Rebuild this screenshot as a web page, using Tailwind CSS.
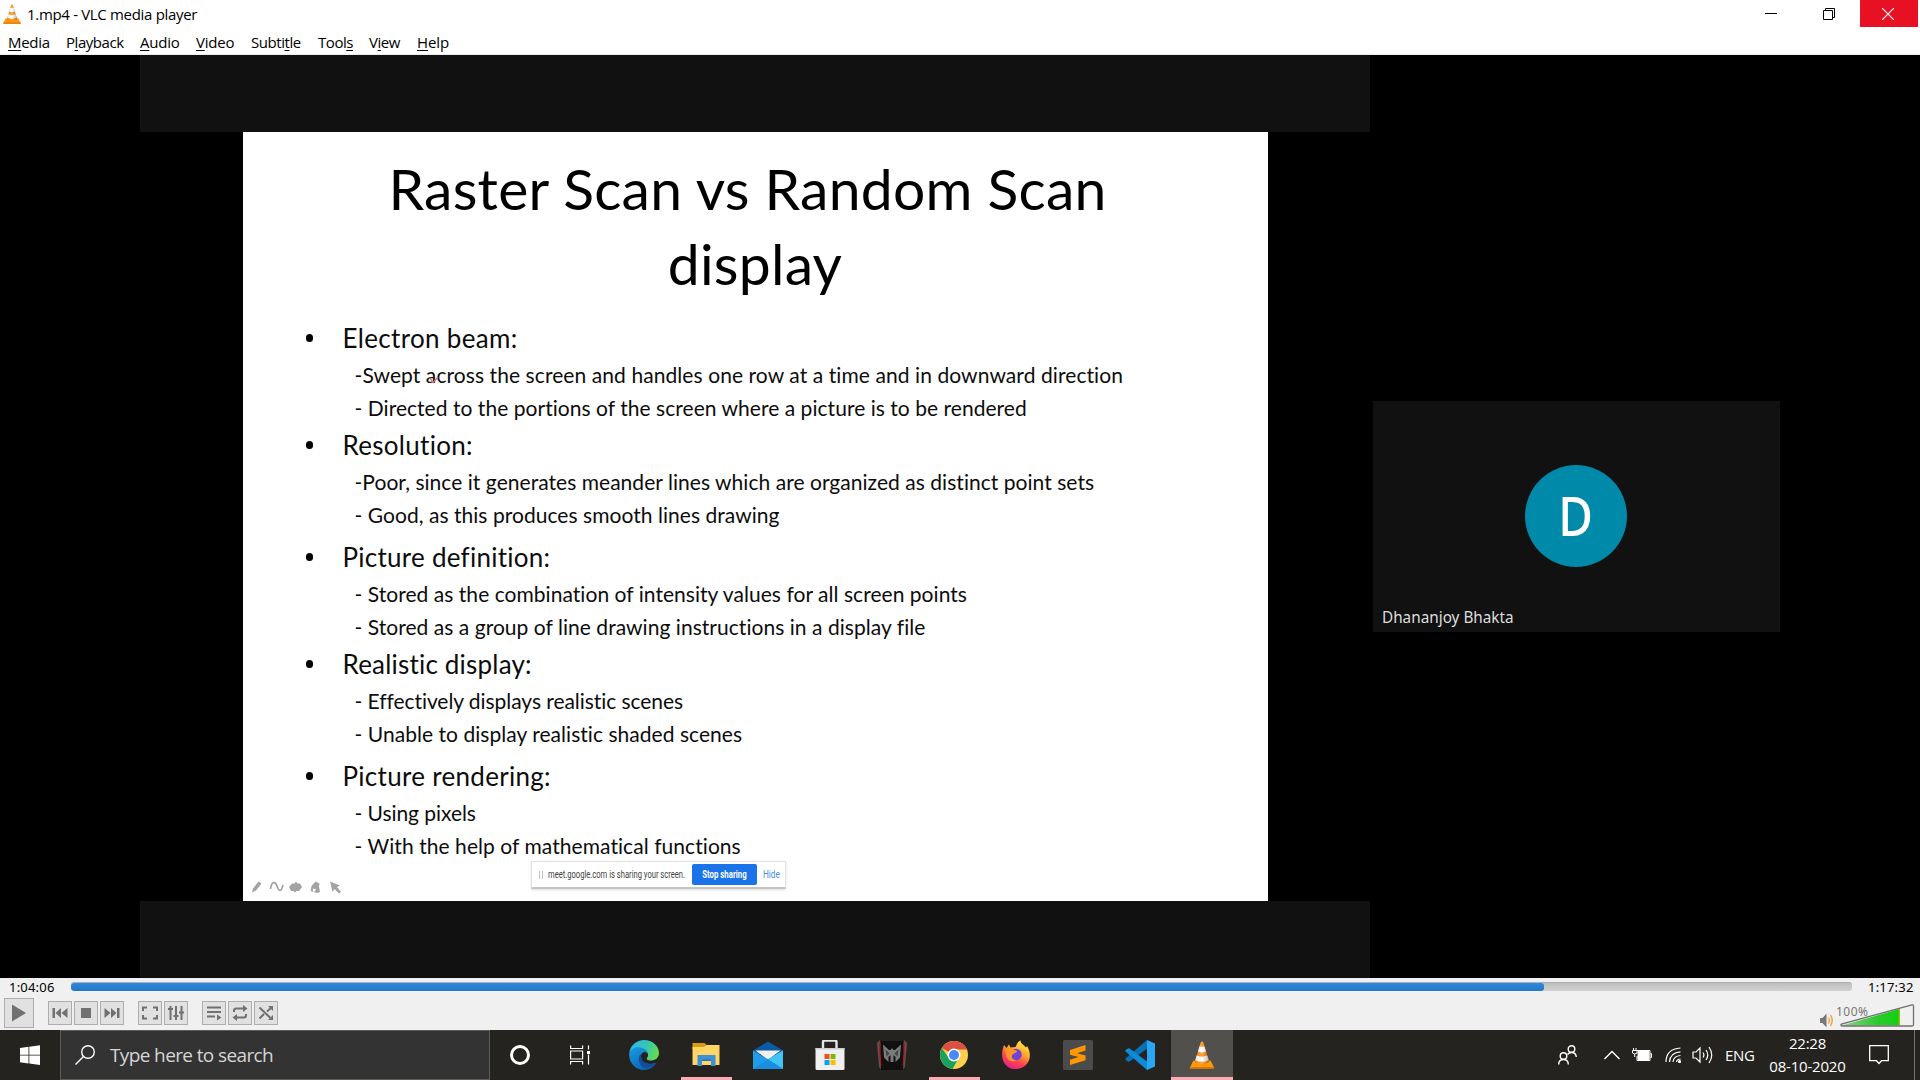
<!DOCTYPE html>
<html lang="en">
<head>
<meta charset="utf-8">
<title>1.mp4 - VLC media player</title>
<script src="https://cdn.jsdelivr.net/npm/@tailwindcss/browser@4"></script>
</head>
<body class="w-[1920px] h-[1080px] overflow-hidden bg-white font-['Open_Sans',sans-serif] flex flex-col">

<!-- Shared cone logo -->
<svg class="absolute w-0 h-0">
  <defs>
    <linearGradient id="cone" x1="0" x2="1" y1="0" y2="0"><stop offset="0" stop-color="#f57c00"/><stop offset=".5" stop-color="#ffa63d"/><stop offset="1" stop-color="#d95f00"/></linearGradient>
    <linearGradient id="coneW" x1="0" x2="1" y1="0" y2="0"><stop offset="0" stop-color="#e8e8e8"/><stop offset=".5" stop-color="#ffffff"/><stop offset="1" stop-color="#b9b9b9"/></linearGradient>
    <symbol id="vlc" viewBox="0 0 26 29">
      <path d="M4 20.500h18l3.500 7a.7.7 0 0 1-.6 1H1.100a.7.7 0 0 1-.6-1z" fill="#ff9a0c"/>
      <path d="M.4 27h25.200v1.500H.6z" fill="#e07600"/>
      <path d="M11.800 1Q13 0 14.200 1L20.500 22q-7.500 4-15 0z" fill="url(#cone)"/>
      <path d="M10.500 5.400q2.500 1.200 5 0l1.700 5.400q-4.200 2-8.400 0zM7.500 15q5.500 2.400 11 0l1.500 5q-7 3.200-14 0z" fill="url(#coneW)"/>
    </symbol>
  </defs>
</svg>

<!-- Title bar -->
<header class="h-7 shrink-0 flex items-start">
  <svg class="w-[18px] h-5 ml-[3px] mt-1"><use href="#vlc"/></svg>
  <div class="ml-[6px] text-[15px] leading-7 tracking-[-0.32px] text-black">1.mp4 - VLC media player</div>
  <div class="ml-auto mr-[2px] flex h-[27px]">
    <div class="w-[58px] pr-1 flex items-center justify-center"><div class="w-3 h-px bg-black"></div></div>
    <div class="w-[58px] pr-1 flex items-center justify-center">
      <svg class="w-3 h-3 mt-[1px]" viewBox="0 0 12 12" fill="none" stroke="#000"><path d="M.5 2.500h9v9h-9zM2.500 2.500v-2h9v9h-2"/></svg>
    </div>
    <div class="w-[58px] pr-[2px] flex items-center justify-center bg-[#e81123]">
      <svg class="w-3 h-3 mt-[1px]" viewBox="0 0 12 12" stroke="#fff" stroke-width="1.100"><path d="M0 0l12 12M12 0L0 12"/></svg>
    </div>
  </div>
</header>

<!-- Menu bar -->
<nav class="h-[27px] shrink-0 flex pl-2 border-b border-[#ececec] text-[15px] leading-[29px] tracking-[-0.45px] text-black [&_u]:underline-offset-2 [&_u]:decoration-1 whitespace-nowrap">
  <div class="w-[58px] tracking-[-0.3px]"><u>M</u>edia</div>
  <div class="w-[74px]">P<u>l</u>ayback</div>
  <div class="w-[56px] tracking-[-0.2px]"><u>A</u>udio</div>
  <div class="w-[55px] tracking-[-0.2px]"><u>V</u>ideo</div>
  <div class="w-[67px]">Subti<u>t</u>le</div>
  <div class="w-[51px]">Tool<u>s</u></div>
  <div class="w-[48px]">V<u>i</u>ew</div>
  <div class="tracking-[-0.1px]"><u>H</u>elp</div>
</nav>

<!-- Video surface -->
<main class="h-[923px] shrink-0 bg-black flex pl-[140px]">
  <div class="w-[1230px] bg-black flex flex-col">
    <div class="h-[77px] bg-[#111111]"></div>
    <section class="relative w-[1025px] h-[769px] ml-[102.500px] bg-white font-['Lato',sans-serif] text-[#0c0c0c] pt-[19px]">
      <h1 class="text-center text-[57px] leading-[75px] tracking-[0.25px] text-black">Raster Scan vs Random Scan&nbsp;<br>display</h1>
      <ul class="mt-[19px] flex flex-col whitespace-nowrap text-[21px] leading-[33px] tracking-[0.04px]">
        <li>
          <div class="h-[36px] mb-[2px] flex items-center pl-[63px]"><span class="w-[7px] h-2 rounded-full bg-black"></span><span class="ml-[30px] text-[26px] leading-[36px] tracking-[0.33px]">Electron beam:</span></div>
          <div class="pl-[112px] tracking-[0.08px]">-Swept across the screen and handles one row at a time and in downward direction</div>
          <div class="pl-[112px]">- Directed to the portions of the screen where a picture is to be rendered</div>
        </li>
        <li class="mt-[3px]">
          <div class="h-[36px] mb-[2px] flex items-center pl-[63px]"><span class="w-[7px] h-2 rounded-full bg-black"></span><span class="ml-[30px] text-[26px] leading-[36px] tracking-[0.3px]">Resolution:</span></div>
          <div class="pl-[112px]">-Poor, since it generates meander lines which are organized as distinct point sets</div>
          <div class="pl-[112px]">- Good, as this produces smooth lines drawing</div>
        </li>
        <li class="mt-[8px]">
          <div class="h-[36px] mb-[2px] flex items-center pl-[63px]"><span class="w-[7px] h-2 rounded-full bg-black"></span><span class="ml-[30px] text-[26px] leading-[36px] tracking-[0.26px]">Picture definition:</span></div>
          <div class="pl-[112px]">- Stored as the combination of intensity values for all screen points</div>
          <div class="pl-[112px]">- Stored as a group of line drawing instructions in a display file</div>
        </li>
        <li class="mt-[3px]">
          <div class="h-[36px] mb-[2px] flex items-center pl-[63px]"><span class="w-[7px] h-2 rounded-full bg-black"></span><span class="ml-[30px] text-[26px] leading-[36px] tracking-[0.2px]">Realistic display:</span></div>
          <div class="pl-[112px] tracking-[-0.06px]">- Effectively displays realistic scenes</div>
          <div class="pl-[112px]">- Unable to display realistic shaded scenes</div>
        </li>
        <li class="mt-[8px]">
          <div class="h-[36px] mb-[2px] flex items-center pl-[63px]"><span class="w-[7px] h-2 rounded-full bg-black"></span><span class="ml-[30px] text-[26px] leading-[36px] tracking-[0.3px]">Picture rendering:</span></div>
          <div class="pl-[112px] tracking-[-0.06px]">- Using pixels</div>
          <div class="pl-[112px] tracking-[0.06px]">- With the help of mathematical functions</div>
        </li>
      </ul>

      <!-- Laser pointer mark -->
      <svg class="absolute left-[186px] top-[243px] w-[10px] h-[10px]" viewBox="0 0 10 10" fill="none" stroke="#e0687c" stroke-width="1.300"><path d="M1 3l3 4.500L9 2"/></svg>

      <!-- Slide show pen tools -->
      <svg class="absolute left-[7px] top-[748px] w-[94px] h-[14px]" viewBox="0 0 94 14" fill="#a3a3a3">
        <path d="M2 12.500l1-4 5.500-7 3 2-5.500 7z"/>
        <path d="M20.500 9c1-8 5-8 6.500-3s4 7 6-1" fill="none" stroke="#a3a3a3" stroke-width="1.700"/>
        <path d="M39 7l3-3.500h2.500L46 1.500l1.500 2H50L52 7l-3 4h-2.500L45 12.500 43.500 11H41z"/>
        <path d="M60.500 11l1-5 4-4.500 4 2-.5 3 1 5.500-3 1z"/><path d="M63 8.500l3 1-1 2h-2z" fill="#fff"/>
        <path d="M80 1.500l10 4-3 1.500 4 5-2 1.500-4.500-4.500-2 3z"/>
      </svg>

      <!-- Screen sharing notice -->
      <div class="absolute left-[288px] top-[729px] w-[255px] h-[28px] bg-white border border-[#e2e2e2] border-b-2 border-b-[#c4c4c4] shadow-sm flex items-center font-['Roboto',sans-serif] whitespace-nowrap">
        <div class="ml-[7px] w-[4px] h-2 border-x border-[#c2c2c2]"></div>
        <div class="ml-[5px] w-[144px] text-[10px] leading-3 text-[#444] origin-left scale-x-[0.76]">meet.google.com is sharing your screen.</div>
        <div class="w-[65px] h-[21px] rounded-[2px] bg-[#1a73e8] flex items-center justify-center text-white font-bold text-[10px]"><span class="scale-x-[0.78]">Stop sharing</span></div>
        <div class="ml-[6px] text-[10px] text-[#4b8ee8] origin-left scale-x-[0.82]">Hide</div>
      </div>
    </section>
    <div class="h-[77px] bg-[#111111]"></div>
  </div>

  <!-- Participant tile -->
  <div class="ml-[3px] mt-[346px] w-[407px] h-[231px] bg-[#111111] relative flex items-center justify-center">
    <div class="w-[102px] h-[102px] -mt-px mr-px rounded-full bg-[#0089a9] flex items-center justify-center text-white text-[54px] leading-none font-medium font-['Noto_Sans',sans-serif]"><span class="scale-x-[0.88] mb-[3px] mr-px">D</span></div>
    <div class="absolute left-[9px] bottom-[4px] font-['Noto_Sans',sans-serif] text-[17px] leading-[22px] text-[#dedede] origin-left scale-x-[0.9] whitespace-nowrap">Dhananjoy Bhakta</div>
  </div>
</main>

<!-- Player controls -->
<div class="h-[52px] shrink-0 bg-[#f0f0f0] flex flex-col">
  <div class="h-[18px] flex items-center font-['Noto_Sans',sans-serif] text-[13px] leading-[18px] text-black">
    <div class="w-[71px] pl-[9px] tracking-[0.2px]">1:04:06</div>
    <div class="w-[1781px] h-[9px] rounded-[3px] border-t border-[#b0b0b0] bg-linear-to-b from-[#bdbdbd] to-[#d2d2d2] mt-[-1px] overflow-hidden">
      <div class="w-[1473px] h-full rounded-[3px] bg-linear-to-b from-[#2b8ae0] to-[#2678c4]"></div>
    </div>
    <div class="pl-[16px] tracking-[0.2px]">1:17:32</div>
  </div>
  <div class="flex-1 flex items-start pl-1 pt-[2px]">
    <div class="w-[30px] h-[30px] border border-[#adadad] bg-[#e1e1e1] flex items-center justify-center">
      <svg class="w-[14px] h-[18px]" viewBox="0 0 14 18" fill="#707070"><path d="M0 0.500l14 8.500L0 17.500z"/></svg>
    </div>
    <div class="ml-[14px] mt-[3px] flex gap-[2px] [&>div]:w-6 [&>div]:h-6 [&>div]:border [&>div]:border-[#adadad] [&>div]:bg-[#e1e1e1] [&>div]:flex [&>div]:items-center [&>div]:justify-center [&_svg]:w-4 [&_svg]:h-4">
      <div><svg viewBox="0 0 16 16" fill="#707070"><path d="M.5 3H3v10H.5zM9 3v10L3.500 8zM15.500 3v10L9.500 8z"/></svg></div>
      <div><svg viewBox="0 0 16 16" fill="#707070"><path d="M3 3h10v10H3z"/></svg></div>
      <div><svg viewBox="0 0 16 16" fill="#707070"><path d="M15.500 3H13v10h2.500zM7 3v10l5.500-5zM.5 3v10l6-5z"/></svg></div>
      <div class="ml-3"><svg viewBox="0 0 16 16" fill="none" stroke="#707070" stroke-width="2"><path d="M1 6V2.500h4M11 2.500h4V6M1 10v3.500h4M11 13.500h4V10"/></svg></div>
      <div><svg viewBox="0 0 16 16" fill="none" stroke="#707070" stroke-width="2"><path d="M2.500 1v14M8 1v14M13.500 1v14M0 4h5M5.500 11h5M11 7.500h5"/></svg></div>
      <div class="ml-3"><svg viewBox="0 0 16 16" fill="none" stroke="#707070" stroke-width="2"><path d="M1 2.500h14M1 7h14M1 11.500h8"/><path d="M11 9.500v6l4.500-3z" fill="#707070" stroke="none"/></svg></div>
      <div><svg viewBox="0 0 16 16" fill="none" stroke="#707070" stroke-width="2"><path d="M2 7V5.500Q2 3.500 4 3.500h8M14 9v1.500q0 2-2 2H4"/><path d="M11 0l4.500 3.500L11 7zM5 9L.5 12.500 5 16z" fill="#707070" stroke="none"/></svg></div>
      <div><svg viewBox="0 0 16 16" fill="none" stroke="#707070" stroke-width="2"><path d="M1.500 2.500L12.500 13M1.500 13.500L6 9M9 6.500L13 3"/><path d="M10 1h5v5zM10 15h5v-5z" fill="#707070" stroke="none"/></svg></div>
    </div>
    <div class="ml-auto mr-[5px] mt-[6px] relative w-[96px] h-[26px]">
      <svg class="w-[96px] h-[26px]" viewBox="0 0 96 26">
        <defs><linearGradient id="vol" x1="0" x2="1"><stop offset="0" stop-color="#8ccf8c"/><stop offset=".6" stop-color="#2ecb2e"/><stop offset=".96" stop-color="#12cf12"/><stop offset="1" stop-color="#b5b51a"/></linearGradient></defs>
        <path d="M1 14h2.500l4-4.500v14l-4-4.500H1z" fill="#777"/>
        <path d="M9.500 13.500q1.500 3 0 6M11.500 11q3.500 5.500 0 11" fill="none" stroke="#ff9a1f" stroke-width="1.300"/>
        <path d="M23 21.500L81 4.800V21.500z" fill="url(#vol)"/>
        <path d="M22.500 20Q21 22 23.500 22H93q1.500 0 1.500-1.500V2Q94.500.5 93 .9z" fill="none" stroke="#6f6f6f" stroke-width="1.300"/>
      </svg>
      <div class="absolute left-[17px] top-0 font-['Noto_Sans',sans-serif] text-[12px] leading-4 tracking-[0.500px] text-[#777]">100%</div>
    </div>
  </div>
</div>

<!-- Taskbar -->
<footer class="h-[50px] shrink-0 bg-[#24231f] flex text-white">
  <div class="w-[60px] flex items-center justify-center">
    <svg class="w-5 h-5" viewBox="0 0 20 20" fill="#fff"><path d="M0 3l8.500-1.200v7.900H0zM9.300 1.700L20 .2v9.500H9.300zM0 10.500h8.500v7.900L0 17.200zM9.300 10.500H20V20L9.300 18.500z"/></svg>
  </div>
  <div class="w-[430px] bg-[#333333] border border-[#5c5b58] flex items-center">
    <svg class="w-5 h-5 ml-[14px]" viewBox="0 0 20 20" fill="none" stroke="#fff" stroke-width="1.400"><circle cx="13" cy="7" r="6.300"/><path d="M8.500 11.500L.5 19.500"/></svg>
    <div class="ml-[15px] text-[19px] tracking-[-0.62px] text-[#d6d6d6]">Type here to search</div>
  </div>
  <div class="w-[60px] flex items-center justify-center"><div class="w-5 h-5 rounded-full border-[3px] border-white"></div></div>
  <div class="w-[63px] flex items-center justify-center pr-2">
    <svg class="w-5 h-5 ml-1" viewBox="0 0 20 20" fill="none" stroke="#fff" stroke-width="1.200"><path d="M.6.5v3h12V.5M.6 19.500v-3h12v3M.6 6h12v8H.6zM18.500.5v4M18.500 9.500v10"/><path d="M17 6h3v3h-3z" fill="#fff" stroke="none"/></svg>
  </div>
  <div class="flex [&>div]:w-[62px] [&>div]:h-[50px] [&>div]:flex [&>div]:items-center [&>div]:justify-center [&>div]:relative [&_svg]:w-[30px] [&_svg]:h-[30px]">
    <!-- Edge -->
    <div><svg viewBox="0 0 30 30">
      <defs><linearGradient id="e1" x1="0" x2="1" y1=".3" y2=".6"><stop offset="0" stop-color="#2fb5ee"/><stop offset=".5" stop-color="#35c5b8"/><stop offset="1" stop-color="#66dd48"/></linearGradient><linearGradient id="e2" x1="0" x2=".6" y1="0" y2="1"><stop offset="0" stop-color="#1b9de2"/><stop offset="1" stop-color="#0c63b5"/></linearGradient></defs>
      <path d="M.4 12C1.500 5 8 0 15 0c8.500 0 15 6 15 13 0 5-4 7.500-8.500 7.500-3 0-4.500-1.200-3.500-2.500 3-4-.5-8.500-6-8.500C6.500 9.500 2 11 .4 12z" fill="url(#e1)"/>
      <path d="M.3 12.500C2 8.500 7 6.500 11.500 7.500 17 8.600 18.800 12 18 13.500c-2-3-6-1-6 3 0 6 6 9 15 6.500C24.500 27.500 20 30 15 30 6 30-1 22 .3 12.500z" fill="url(#e2)"/>
      <path d="M12 13.500c-4 4-2.500 12 4 15 3.500 0 8-1.500 11.500-6C22 25 12 24 12 16.500z" fill="#114f9e"/>
    </svg></div>
    <!-- File Explorer -->
    <div><svg viewBox="0 0 30 30"><path d="M1.500 3h12l2 2v4h-14z" fill="#dd9c0b"/><path d="M1.500 7h11.500l2.500-2h13v20h-27z" fill="#ffd566"/><path d="M6.500 15h18v11h-4.500v-6h-9v6H6.500z" fill="#3c91d6"/><path d="M11 19.500h9V21h-9z" fill="#2872b5"/></svg><span class="absolute bottom-0 left-[6px] w-[51px] h-[3px] bg-[#ffa9b3]"></span></div>
    <!-- Mail -->
    <div><svg viewBox="0 0 30 30"><path d="M0 10.500L15 1.500l15 9V14H0z" fill="#0a5aa8"/><path d="M2.500 10.500h25L15 20z" fill="#f1f1f1"/><path d="M0 10.500l15 8.700 15-8.700V29H0z" fill="#1f9be8"/><path d="M30 10.500V29L15 19.200z" fill="#42c4f5"/><path d="M0 29l15-9.800L30 29z" fill="#1a8fe2"/></svg></div>
    <!-- Store -->
    <div><svg viewBox="0 0 30 30"><path d="M8 9V2q0-1.500 1.500-1.500h10.500q1.500 0 1.500 1.500v7" fill="none" stroke="#e7e7e7" stroke-width="2.400"/><path d="M.5 8h29v20.500q0 1.500-1.500 1.500H2Q.5 30 .5 28.500z" fill="#f0f0f0"/><path d="M.5 8h29v1.500H.5z" fill="#cfcfcf"/><path d="M9.500 14h5v5h-5z" fill="#f25022"/><path d="M15.500 14h5v5h-5z" fill="#7fba00"/><path d="M9.500 20h5v5h-5z" fill="#00a4ef"/><path d="M15.500 20h5v5h-5z" fill="#ffb900"/></svg></div>
    <!-- PredatorSense -->
    <div><svg viewBox="0 0 30 30"><path d="M4 1h22v29H4z" fill="#101010"/><path d="M0 3l3-3v11l1 18-2-2z" fill="#555"/><path d="M30 3l-3-3v11l-1 18 2-2z" fill="#555"/><path d="M2.800 2v12l1 11M27.200 2v12l-1 11" fill="none" stroke="#c80f16" stroke-width="1.200"/><path d="M6 4.500l6 5.500h1.500L15 8l1.500 2H18l6-5.500-1 13-4.500 4.500v-5L16.500 15v7h-3v-7l-2 2v5L7 17.500z" fill="#7b7b7b"/><path d="M8.500 9.500l4 4-3 3zM21.500 9.500l-4 4 3 3z" fill="#444"/></svg></div>
    <!-- Chrome -->
    <div><svg viewBox="0 0 30 30"><circle cx="15" cy="15" r="14" fill="#fdd14b"/><path d="M15 15L2.900 8A14 14 0 0 1 27.900 9.500H15z" fill="#db4f43"/><path d="M2.900 8a14 14 0 0 0 10.600 20.900L19.800 18 15 15 9.500 17.500z" fill="#1aa15f"/><circle cx="15" cy="15" r="6.500" fill="#fff"/><circle cx="15" cy="15" r="5" fill="#4a8af4"/></svg><span class="absolute bottom-0 left-[6px] w-[51px] h-[3px] bg-[#ffa9b3]"></span></div>
    <!-- Firefox -->
    <div><svg viewBox="0 0 30 30"><defs><linearGradient id="ff" x1=".8" x2=".3" y1="0" y2="1"><stop offset="0" stop-color="#fff04a"/><stop offset=".4" stop-color="#ffa62b"/><stop offset=".7" stop-color="#ff4150"/><stop offset="1" stop-color="#e0228a"/></linearGradient></defs><path d="M3 5l2.500 3L8 4.500l1.500 3 5-.5C16 3 18 1 19.500.5c0 3 3 4 5.500 7l1-1.500c4 6 4 14-1 19C18 31.500 7 30 3 22.500 0 17 1 10 3 5z" fill="url(#ff)"/><circle cx="15" cy="14.500" r="5.800" fill="#7043d6"/><path d="M4 9c4-2.500 7-1 9 1 2.500.3 3 1 3 1.500-1 2-4 1.500-5 4-1 2 1 5 5 4.500-4 3-10 1-11-5z" fill="#ff9428"/></svg></div>
    <!-- Sublime Text -->
    <div><svg viewBox="0 0 30 30"><rect width="30" height="30" rx="1.500" fill="#4b4b4b"/><path d="M7 10l15.500-5v5.500L14 13.300l8.500 2.200v4.800L7 25v-5.300l8.500-2.700L7 14.800z" fill="#ff9800"/></svg></div>
    <!-- VS Code -->
    <div><svg viewBox="0 0 30 30"><path d="M22 0l8 3.500v23L22 30z" fill="#2aa7f2"/><path d="M22 0v8.500L4 22l-3.500-2V18.500z" fill="#0b70b8"/><path d="M22 30v-8.500L4 8 .5 10v1.500z" fill="#0f8ad6"/></svg></div>
    <!-- VLC -->
    <div class="bg-[#51504d]"><svg viewBox="0 0 30 30"><use href="#vlc" x="2" y="1" width="26" height="28"/></svg><span class="absolute bottom-0 left-0 w-full h-[3px] bg-[#ffa9b3]"></span></div>
  </div>

  <!-- System tray -->
  <div class="ml-auto flex items-center text-[15px] [&_svg]:fill-none [&_svg]:stroke-white">
    <svg class="w-[19px] h-[20px] mr-[27px]" viewBox="0 0 19 20" stroke-width="1.400"><circle cx="13.500" cy="4" r="3.300"/><circle cx="5.500" cy="11" r="3.300"/><path d="M.7 19.500q0-5 4.800-5t4.800 5M9.500 9.500q1.500-2 4-2 4.500 0 4.800 4.500"/></svg>
    <svg class="w-4 h-[10px] mr-[12px]" viewBox="0 0 16 10" stroke-width="1.400"><path d="M.5 9L8 1.500 15.500 9"/></svg>
    <svg class="w-5 h-[14px] mr-[13px]" viewBox="0 0 20 14" stroke-width="1"><path d="M4.500 2.500h13.500v10h-13V8M18.500 5.500h1v4h-1"/><path d="M6 3.500h11v8H6z" class="fill-white"/><path d="M1.500 0v2.500M4 0v2.500M.5 2.500h4.500v2.500q-2.200 2-4.500 0zM2.700 6v3"/></svg>
    <svg class="w-4 h-4 mr-[11px]" viewBox="0 0 16 16" stroke-width="1.200"><path d="M1 15Q1 2 15.500 1M4.500 15Q5 5.500 15.500 4.800M8 15Q8.500 9 15.500 8.500" /><path d="M11.500 15q.3-2.800 4-3" /><circle cx="14.500" cy="14.500" r="1" class="fill-white"/></svg>
    <svg class="w-[22px] h-[18px] mr-[11px]" viewBox="0 0 22 18" stroke-width="1.200"><path d="M1 6h3l4-4v14l-4-4H1zM11 6.500q1.800 2.500 0 5M14 4q3.500 5 0 10M17 1q5.500 8 0 16"/></svg>
    <div class="w-[44px] tracking-[-0.35px]">ENG</div>
    <div class="w-[77px] text-center leading-[23px] tracking-[-0.2px] pb-px">22:28<br>08-10-2020</div>
    <svg class="w-5 h-5 ml-[23px] mr-[25px]" viewBox="0 0 20 20" stroke-width="1.300"><path d="M.7.7h18.600v15H12.500L10 18.500 7.500 15.700H.7z"/></svg>
    <div class="w-px h-full bg-[#77766f] mr-[5px]"></div>
  </div>
</footer>
</body>
</html>
